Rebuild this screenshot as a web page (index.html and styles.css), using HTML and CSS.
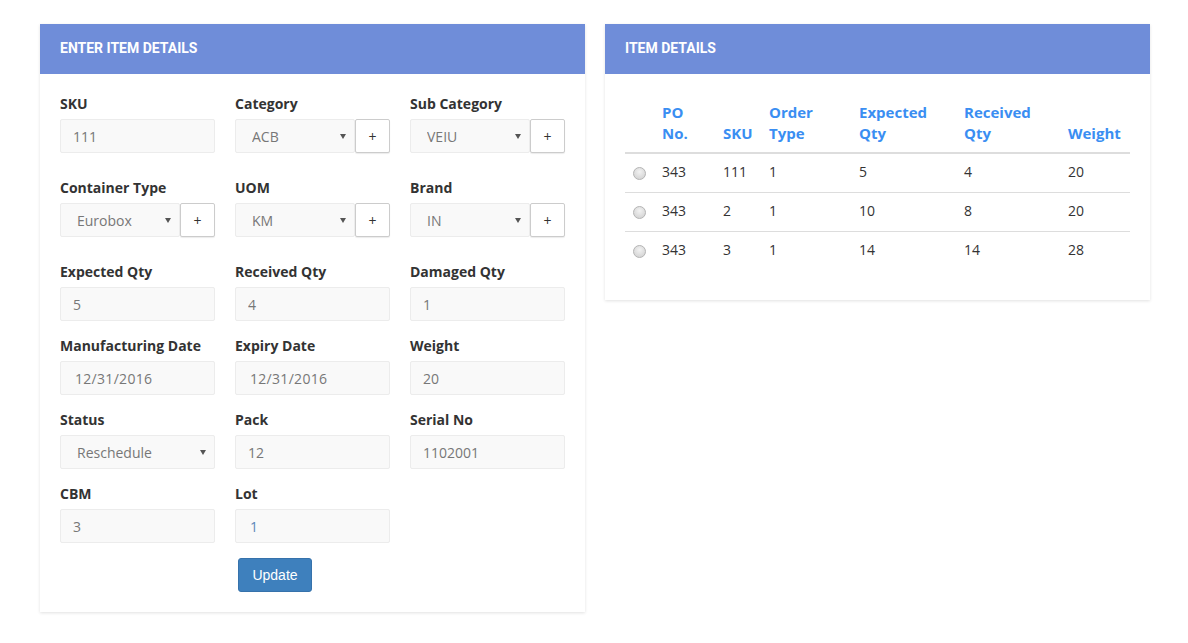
FILE: index.html
```html
<!DOCTYPE html>
<html>
<head>
<meta charset="utf-8">
<link rel="stylesheet" href="styles.css">
</head>
<body>
<div class="page">
  <section class="panel">
    <div class="panel-head">ENTER ITEM DETAILS</div>
    <div class="panel-body">
      <div class="form">
        <div class="field tall"><label>SKU</label><input class="ctl" value="111" readonly></div>
        <div class="field tall"><label>Category</label>
          <div class="group"><div class="sel"><select class="ctl"><option>ACB</option></select></div><button class="add">+</button></div></div>
        <div class="field tall"><label>Sub Category</label>
          <div class="group"><div class="sel"><select class="ctl"><option>VEIU</option></select></div><button class="add">+</button></div></div>

        <div class="field tall"><label>Container Type</label>
          <div class="group"><div class="sel"><select class="ctl"><option>Eurobox</option></select></div><button class="add">+</button></div></div>
        <div class="field tall"><label>UOM</label>
          <div class="group"><div class="sel"><select class="ctl"><option>KM</option></select></div><button class="add">+</button></div></div>
        <div class="field tall"><label>Brand</label>
          <div class="group"><div class="sel"><select class="ctl"><option>IN</option></select></div><button class="add">+</button></div></div>

        <div class="field"><label>Expected Qty</label><input class="ctl" value="5" readonly></div>
        <div class="field"><label>Received Qty</label><input class="ctl" value="4" readonly></div>
        <div class="field"><label>Damaged Qty</label><input class="ctl" value="1" readonly></div>

        <div class="field"><label>Manufacturing Date</label><input class="ctl date" value="12/31/2016" readonly></div>
        <div class="field"><label>Expiry Date</label><input class="ctl date" value="12/31/2016" readonly></div>
        <div class="field"><label>Weight</label><input class="ctl" value="20" readonly></div>

        <div class="field"><label>Status</label><div class="sel"><select class="ctl"><option>Reschedule</option></select></div></div>
        <div class="field"><label>Pack</label><input class="ctl" value="12" readonly></div>
        <div class="field"><label>Serial No</label><input class="ctl" value="1102001" readonly></div>

        <div class="field"><label>CBM</label><input class="ctl" value="3" readonly></div>
        <div class="field"><label>Lot</label><input class="ctl lot" value="1" readonly></div>
        <div class="field"></div>

        <div class="field"></div>
        <div class="field"><button class="btn">Update</button></div>
      </div>
    </div>
  </section>

  <section class="panel">
    <div class="panel-head">ITEM DETAILS</div>
    <div class="panel-body table-body">
      <table class="grid">
        <colgroup>
          <col class="c-radio"><col class="c-po"><col class="c-sku"><col class="c-type"><col class="c-exp"><col class="c-rec"><col class="c-wt">
        </colgroup>
        <thead>
          <tr><th></th><th>PO<br>No.</th><th>SKU</th><th>Order<br>Type</th><th>Expected<br>Qty</th><th>Received<br>Qty</th><th>Weight</th></tr>
        </thead>
        <tbody>
          <tr><td><span class="radio"></span></td><td>343</td><td>111</td><td>1</td><td>5</td><td>4</td><td>20</td></tr>
          <tr><td><span class="radio"></span></td><td>343</td><td>2</td><td>1</td><td>10</td><td>8</td><td>20</td></tr>
          <tr><td><span class="radio"></span></td><td>343</td><td>3</td><td>1</td><td>14</td><td>14</td><td>28</td></tr>
        </tbody>
      </table>
    </div>
  </section>
</div>
</body>
</html>
```

FILE: styles.css
```css
* { box-sizing: border-box; }
html, body { margin: 0; padding: 0; background: #fff; }
body { font-family: "Open Sans", "DejaVu Sans", sans-serif; color: #333; font-size: 14px; }

.page {
  display: grid;
  grid-template-columns: 545px 545px;
  column-gap: 20px;
  align-items: start;
  padding: 24px 40px;
}

.panel {
  background: #fff;
  box-shadow: 0 1px 3px rgba(0,0,0,0.12);
}

.panel-head {
  height: 50px;
  background: #6f8dd9;
  color: #fff;
  font-family: Roboto, "Liberation Sans", sans-serif;
  font-weight: 700;
  font-size: 14px;
  line-height: 16px;
  display: flex;
  align-items: center;
  padding-left: 20px;
  padding-bottom: 2px;
}

.panel-body { padding: 20px 20px 20px 20px; }

.form {
  display: grid;
  grid-template-columns: repeat(3, 155px);
  column-gap: 20px;
  row-gap: 15px;
}

.field { display: flex; flex-direction: column; }
.field.tall { margin-bottom: 10px; }

.field label {
  font-weight: 700;
  font-size: 14px;
  line-height: 20px;
  color: #333;
  margin-bottom: 5px;
}

.ctl {
  display: block;
  width: 100%;
  height: 34px;
  border: 1px solid #ececec;
  border-radius: 2px;
  background: #f9f9f9;
  color: #777;
  font-family: "Open Sans", "DejaVu Sans", sans-serif;
  font-size: 14px;
  padding: 0 12px;
  outline: none;
}
.ctl.date { padding-left: 14px; letter-spacing: 0.3px; }
.ctl.lot { color: #5b87b8; padding-left: 14px; }

select.ctl {
  -webkit-appearance: none;
  appearance: none;
  padding-left: 16px;
}

.sel { position: relative; flex: 1; }
.sel::after {
  content: "";
  position: absolute;
  right: 9px;
  top: 15px;
  border-left: 3.5px solid transparent;
  border-right: 3.5px solid transparent;
  border-top: 5px solid #555;
  pointer-events: none;
}

.group { display: flex; }
.group .sel { flex: 0 0 120px; }

.add {
  flex: 0 0 35px;
  height: 34px;
  margin-left: 0;
  border: 1px solid #ccc;
  border-radius: 2px;
  background: #fff;
  color: #333;
  font-family: "Open Sans", sans-serif;
  font-size: 14px;
  padding: 0;
  box-shadow: 0 1px 1px rgba(0,0,0,0.08);
}

.btn {
  align-self: flex-start;
  margin-left: 3px;
  width: 74px;
  height: 34px;
  background: #3e80bd;
  border: 1px solid #3672ab;
  border-radius: 3px;
  color: #fff;
  font-family: "Liberation Sans", Arial, sans-serif;
  font-size: 14px;
  padding: 0;
}

.table-body { padding: 20px 20px 30px 20px; }

.grid {
  width: 505px;
  table-layout: fixed;
  border-collapse: collapse;
}
.c-radio { width: 29px; }
.c-po { width: 61px; }
.c-sku { width: 46px; }
.c-type { width: 90px; }
.c-exp { width: 105px; }
.c-rec { width: 104px; }
.c-wt { width: 70px; }

.grid th {
  text-align: left;
  vertical-align: bottom;
  color: #3a8ef2;
  font-weight: 700;
  font-size: 15px;
  line-height: 21px;
  padding: 8px;
  border-bottom: 2px solid #ddd;
}

.grid td {
  padding: 7px 8px 9px 8px;
  line-height: 22px;
  font-size: 14px;
  color: #333;
  border-top: 1px solid #ddd;
  vertical-align: middle;
}
.grid tbody tr:first-child td { border-top: none; }

.radio {
  display: inline-block;
  width: 13px;
  height: 13px;
  border-radius: 50%;
  border: 1px solid #b5b5b5;
  background: radial-gradient(circle at 50% 35%, #f2f2f2 0%, #dcdcdc 60%, #cfcfcf 100%);
  vertical-align: middle;
  position: relative;
  top: 0;
}
```
